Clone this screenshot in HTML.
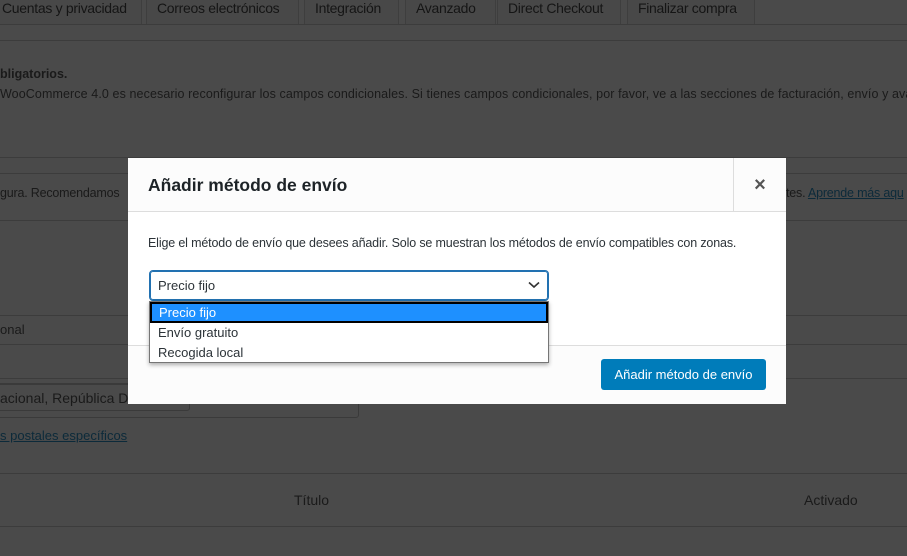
<!DOCTYPE html>
<html><head><meta charset="utf-8"><style>
*{margin:0;padding:0;box-sizing:border-box}
body{width:907px;height:556px;overflow:hidden;background:#4a4a4a;font-family:"Liberation Sans",sans-serif;font-size:13px;color:#1a1a1a;position:relative}
.a{position:absolute;white-space:nowrap}
.hl{position:absolute;left:0;right:0;height:1px;background:#3c3c3c}
.tab{position:absolute;top:0;height:25px;border:1px solid #3e3e3e;border-top:none;background:#484848;font-size:14px;color:#151515;padding:0 10px;line-height:16px;letter-spacing:-0.3px}
</style></head><body>
<div class="tab" style="left:-10px;width:152px;border-left:none;padding-left:12px">Cuentas y privacidad</div>
<div class="tab" style="left:146px;width:153px">Correos electrónicos</div>
<div class="tab" style="left:304px;width:95px">Integración</div>
<div class="tab" style="left:405px;width:91px">Avanzado</div>
<div class="tab" style="left:497px;width:124px">Direct Checkout</div>
<div class="tab" style="left:627px;width:128px">Finalizar compra</div>
<div class="hl" style="top:24px"></div>
<div class="hl" style="top:40px"></div>
<div class="a" style="left:0;top:67px;font-weight:bold;font-size:12.5px">bligatorios.</div>
<div class="a" style="left:0;top:87px;font-size:12.5px;letter-spacing:0.1px">WooCommerce 4.0 es necesario reconfigurar los campos condicionales. Si tienes campos condicionales, por favor, ve a las secciones de facturación, envío y ava</div>
<div class="hl" style="top:157px"></div>
<div class="hl" style="top:173px"></div>
<div class="a" style="left:0;top:186px;font-size:12.5px;letter-spacing:-0.2px">gura. Recomendamos</div>
<div class="a" style="left:786px;top:186px;font-size:12.5px;letter-spacing:-0.2px">tes. <span style="text-decoration:underline;color:#0c2a3a">Aprende más aqu</span></div>
<div class="hl" style="top:220px"></div>
<div class="hl" style="top:315px"></div>
<div class="a" style="left:0;top:322px;font-size:13px">onal</div>
<div class="hl" style="top:344px"></div>
<div class="hl" style="top:378px"></div>
<div style="position:absolute;left:-5px;top:383px;width:364px;height:35px;border:1px solid #3a3a3a;border-radius:3px"></div>
<div style="position:absolute;left:-5px;top:384px;width:195px;height:27px;border:1px solid #3a3a3a;border-radius:3px"></div>
<div class="a" style="left:0;top:390px;font-size:14px">acional, República Do</div>
<div class="a" style="left:0;top:428px;font-size:13px;text-decoration:underline;color:#0c2a3a">s postales específicos</div>
<div class="hl" style="top:473px"></div>
<div class="a" style="left:294px;top:492px;font-size:14px">Título</div>
<div class="a" style="left:804px;top:492px;font-size:14px">Activado</div>
<div class="hl" style="top:526px"></div>

<div style="position:absolute;left:128px;top:158px;width:658px;height:246px;background:#fff">
  <div style="position:absolute;left:0;top:0;width:658px;height:54px;background:#fcfcfc;border-bottom:1px solid #ddd"></div>
  <div class="a" style="left:20px;top:17px;font-size:17.5px;font-weight:bold;color:#1d2327">Añadir método de envío</div>
  <div style="position:absolute;left:605px;top:0;width:53px;height:54px;border-left:1px solid #ddd;text-align:center;line-height:54px;font-size:20px;color:#555;font-weight:bold">×</div>
  <div class="a" style="left:20px;top:78px;font-size:12.5px;color:#2c3338;letter-spacing:-0.15px">Elige el método de envío que desees añadir. Solo se muestran los métodos de envío compatibles con zonas.</div>
  <div style="position:absolute;left:0;top:187px;width:658px;height:59px;background:#fcfcfc;border-top:1px solid #ddd"></div>
  <div style="position:absolute;left:21px;top:112px;width:400px;height:31px;border:1px solid #2271b1;border-radius:4px;box-shadow:0 0 0 1px #2271b1 inset"></div>
  <div class="a" style="left:30px;top:120px;font-size:13px;color:#2c3338">Precio fijo</div>
  <svg style="position:absolute;left:400px;top:123px" width="12" height="8"><path d="M1 1.5 6 6 11 1.5" fill="none" stroke="#333" stroke-width="1.6"/></svg>
  <div style="position:absolute;left:473px;top:201px;width:165px;height:31px;background:#007cba;border-radius:3px;color:#fff;text-align:center;line-height:31px;font-size:13px">Añadir método de envío</div>
</div>
<div style="position:absolute;left:149px;top:301px;width:400px;height:62px;background:#fff;border:1px solid #767676;box-shadow:0 2px 4px rgba(0,0,0,.3)">
  <div style="height:21px;background:#1e90ff;border:2px solid #000;color:#fff;padding-left:7px;line-height:17px;font-size:13px">Precio fijo</div>
  <div style="height:20px;padding-left:8px;line-height:20px;font-size:13px;color:#2c3338">Envío gratuito</div>
  <div style="height:19px;padding-left:8px;line-height:19px;font-size:13px;color:#2c3338">Recogida local</div>
</div>
</body></html>
